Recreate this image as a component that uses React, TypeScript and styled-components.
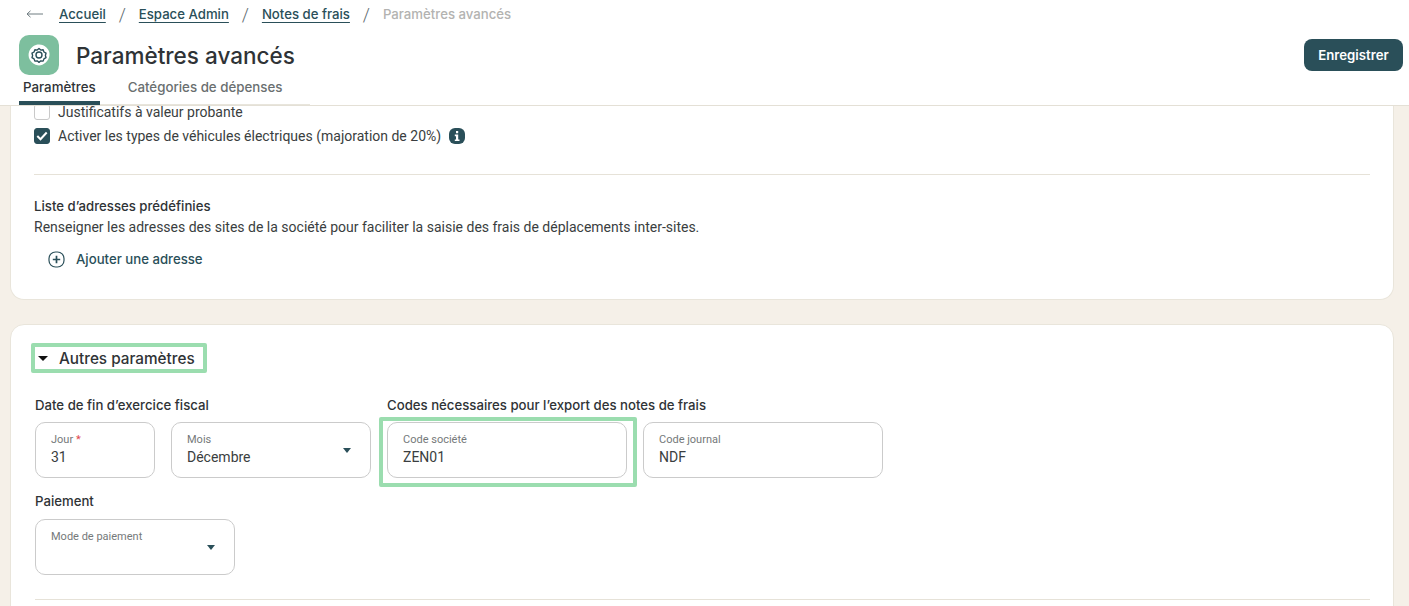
import React, { FunctionComponent } from "react";
import styled, { createGlobalStyle } from "styled-components";

const TEAL = "#2a4f59";
const HEADING_FONT = '"Inter", "Noto Sans", sans-serif';
const BODY_FONT = 'Roboto, "Liberation Sans", sans-serif';

const GlobalStyle = createGlobalStyle`
  html, body {
    margin: 0;
    height: 100%;
    overflow: hidden;
    background: #f5f0e8;
    font-family: ${BODY_FONT};
    color: #33383a;
  }
  * { box-sizing: border-box; }
`;

const Page = styled.div`
  height: 606px;
  display: flex;
  flex-direction: column;
  overflow: hidden;
`;

const Header = styled.header`
  height: 106px;
  flex: none;
  background: #fff;
  border-bottom: 1px solid #e4e0d6;
`;

const Breadcrumb = styled.nav`
  height: 28px;
  display: flex;
  align-items: center;
  padding-left: 26px;
  font-family: ${HEADING_FONT};
  font-size: 13.2px;
  font-weight: 500;
`;

const Crumb = styled.a`
  color: ${TEAL};
  text-decoration: underline;
  text-underline-offset: 3px;
`;

const CurrentCrumb = styled.span`
  color: #b3b3b1;
`;

const Slash = styled.span`
  width: 33px;
  text-align: center;
  color: #5c6a6e;
  font-family: ${BODY_FONT};
  font-weight: 300;
  font-size: 18px;
`;

const TitleRow = styled.div`
  height: 40px;
  margin-top: 7px;
  display: flex;
  align-items: center;
  padding: 0 6px 0 19px;
`;

const IconTile = styled.div`
  width: 40px;
  height: 40px;
  border-radius: 10px;
  background: #7dbf9e;
  display: flex;
  align-items: center;
  justify-content: center;
`;

const Title = styled.h1`
  margin: 0 0 0 17px;
  flex: 1;
  font-family: ${HEADING_FONT};
  font-size: 22.5px;
  font-weight: 500;
  color: #2f3336;
`;

const SaveButton = styled.button`
  width: 99px;
  height: 32px;
  border: 0;
  border-radius: 8px;
  background: ${TEAL};
  color: #fff;
  font-family: ${HEADING_FONT};
  font-size: 13.2px;
  font-weight: 600;
`;

const Tabs = styled.div`
  width: 291px;
  height: 25px;
  margin: 5px 0 0 19px;
  display: flex;
  border-bottom: 1px solid #e8e5dc;
`;

const Tab = styled.div<{ $active?: boolean }>`
  height: 25px;
  flex: none;
  padding: 0 4px;
  margin-right: ${({ $active }) => ($active ? "24px" : "0")};
  border-bottom: ${({ $active }) => ($active ? `4px solid ${TEAL}` : "0")};
  border-radius: 3px 3px 0 0;
  font-family: ${HEADING_FONT};
  font-size: 13.3px;
  line-height: 15px;
  font-weight: 500;
  color: ${({ $active }) => ($active ? "#2f3336" : "#6a6f70")};
  white-space: nowrap;
`;

const Scroller = styled.main`
  flex: 1;
  overflow: hidden;
  padding: 0 15px 0 10px;
  display: flex;
  flex-direction: column;
  gap: 24px;
`;

const ClippedCard = styled.section`
  flex: none;
  margin-top: -6px;
  background: #fff;
  border: 1px solid #e9e5db;
  border-top: 0;
  border-radius: 0 0 14px 14px;
  padding: 0 23px;
`;

const Card = styled.section`
  flex: none;
  background: #fff;
  border: 1px solid #e9e5db;
  border-radius: 14px;
  padding: 22px 23px 0 24px;
`;

const CheckRow = styled.label`
  display: flex;
  align-items: center;
  height: 24px;
  font-size: 14px;
  color: #3a3e40;
`;

const CheckBox = styled.span<{ $checked?: boolean }>`
  width: 16px;
  height: 16px;
  margin-right: 8px;
  border-radius: 3px;
  border: 1px solid ${({ $checked }) => ($checked ? TEAL : "#c9c9c9")};
  background: ${({ $checked }) => ($checked ? TEAL : "#fff")};
  display: flex;
  align-items: center;
  justify-content: center;
`;

const InfoBadge = styled.span`
  width: 16px;
  height: 16px;
  margin-left: 8px;
  border-radius: 6px;
  background: ${TEAL};
  display: flex;
  align-items: center;
  justify-content: center;
`;

const Divider = styled.hr<{ $top: number }>`
  margin: ${({ $top }) => $top}px 0 0;
  border: 0;
  border-top: 1px solid #e6e2d8;
`;

const FieldHeading = styled.h3<{ $top?: number }>`
  margin: ${({ $top }) => $top || 0}px 0 0;
  font-family: ${HEADING_FONT};
  font-size: 13.2px;
  line-height: 18px;
  font-weight: 540;
  color: #2f3336;
`;

const Paragraph = styled.p`
  margin: 3px 0 0;
  font-size: 14px;
  line-height: 18px;
  color: #3a3e40;
`;

const AddButton = styled.div`
  margin: 13px 0 30px 14px;
  display: flex;
  align-items: center;
  gap: 11px;
  height: 20px;
  font-family: ${HEADING_FONT};
  font-size: 13.2px;
  font-weight: 540;
  color: ${TEAL};
`;

const SectionToggle = styled.div`
  position: relative;
  display: flex;
  align-items: center;
  gap: 11px;
  width: fit-content;
  height: 22px;
  padding-left: 3px;
  font-family: ${HEADING_FONT};
  font-size: 15.3px;
  font-weight: 540;
  color: #2f3336;
`;

const Highlight = styled.span<{ $inset: string }>`
  position: absolute;
  inset: ${({ $inset }) => $inset};
  border: 4px solid #9bddaf;
  border-radius: 2px;
  pointer-events: none;
`;

const FieldsRow = styled.div`
  margin-top: 27px;
  display: flex;
  gap: 16px;
`;

const FieldGroup = styled.div<{ $gap?: number }>`
  display: flex;
  flex-direction: column;
  gap: ${({ $gap }) => $gap || 8}px;
`;

const FieldLine = styled.div`
  display: flex;
  gap: 16px;
`;

const Field = styled.div<{ $width: number }>`
  position: relative;
  width: ${({ $width }) => $width}px;
  height: 56px;
  padding: 10px 16px 0 15px;
  border: 1px solid #cbcbcb;
  border-radius: 10px;
`;

const FieldLabel = styled.div`
  font-size: 11px;
  line-height: 14px;
  color: #75797a;
`;

const Required = styled.span`
  color: #e0484d;
`;

const FieldValue = styled.div`
  margin-top: 1px;
  font-size: 14px;
  line-height: 18px;
  color: #3a3e40;
`;

const Caret = styled.span`
  position: absolute;
  right: 19px;
  top: 25px;
  width: 0;
  height: 0;
  border-left: 4.5px solid transparent;
  border-right: 4.5px solid transparent;
  border-top: 5px solid ${TEAL};
`;

const ToggleCaret = styled(Caret)`
  position: static;
  border-left-width: 5px;
  border-right-width: 5px;
  border-top-color: #111;
`;

const PaymentGroup = styled(FieldGroup)`
  margin-top: 14px;
`;

const CardEnd = styled.div`
  height: 40px;
`;

const SelectField: FunctionComponent<{
  label: string;
  value?: string;
  width: number;
}> = ({ label, value, width }) => (
  <Field $width={width}>
    <FieldLabel>{label}</FieldLabel>
    <FieldValue>{value}</FieldValue>
    <Caret />
  </Field>
);

const GearIcon = () => (
  <svg width="26" height="26" viewBox="0 0 26 26">
    <path
      d="M13 2.500c3.200 0 5.400 1 7.400 3 2.300 2.300 3.400 4.600 3.100 7.600-.3 3-1.600 5.700-4 7.600-2.200 1.800-5 3-7.800 2.600-2.900-.4-5.400-1.900-7-4.200C3 16.800 2.200 14 2.700 11.200 3.200 8.500 4.800 6 7.200 4.300 8.900 3.100 10.900 2.500 13 2.500z"
      fill="#fff"
    />
    <path
      d="M13 5.800l2 1.700 2.600-.3.900 2.500 2.300 1.300-.7 2.500.7 2.500-2.300 1.300-.9 2.500-2.600-.3-2 1.700-2-1.700-2.600.3-.9-2.500-2.300-1.300.7-2.500-.7-2.500 2.300-1.300.9-2.500 2.600.3z"
      transform="translate(1.300 1.300) scale(0.9)"
      fill="none"
      stroke={TEAL}
      strokeWidth="1.500"
      strokeLinejoin="round"
    />
    <circle cx="13" cy="13" r="3" fill="none" stroke={TEAL} strokeWidth="1.400" />
  </svg>
);

const BackArrow = () => (
  <svg width="17" height="8" viewBox="0 0 17 8" style={{ marginRight: 16 }}>
    <path d="M17 4H1M4.500.8 1 4l3.500 3.200" fill="none" stroke="#6f7c80" strokeWidth="1" />
  </svg>
);

const App: FunctionComponent = () => (
  <Page>
    <GlobalStyle />
    <Header>
      <Breadcrumb>
        <BackArrow />
        <Crumb>Accueil</Crumb>
        <Slash>/</Slash>
        <Crumb>Espace Admin</Crumb>
        <Slash>/</Slash>
        <Crumb>Notes de frais</Crumb>
        <Slash>/</Slash>
        <CurrentCrumb>Paramètres avancés</CurrentCrumb>
      </Breadcrumb>
      <TitleRow>
        <IconTile>
          <GearIcon />
        </IconTile>
        <Title>Paramètres avancés</Title>
        <SaveButton>Enregistrer</SaveButton>
      </TitleRow>
      <Tabs>
        <Tab $active>Paramètres</Tab>
        <Tab>Catégories de dépenses</Tab>
      </Tabs>
    </Header>
    <Scroller>
      <ClippedCard>
        <CheckRow>
          <CheckBox />
          Justificatifs à valeur probante
        </CheckRow>
        <CheckRow>
          <CheckBox $checked>
            <svg width="12" height="10" viewBox="0 0 12 10">
              <path d="M1.300 5l3.200 3.200 6.200-6.700" fill="none" stroke="#fff" strokeWidth="2" />
            </svg>
          </CheckBox>
          Activer les types de véhicules électriques (majoration de 20%)
          <InfoBadge>
            <svg width="6" height="10" viewBox="0 0 6 10">
              <path d="M2 0h2.200v2.200H2zM.8 3.600h3.400v4.800H5.500V10H.8V8.400H2V5.200H.8z" fill="#fff" />
            </svg>
          </InfoBadge>
        </CheckRow>
        <Divider $top={26} />
        <FieldHeading $top={22}>Liste d’adresses prédéfinies</FieldHeading>
        <Paragraph>
          Renseigner les adresses des sites de la société pour faciliter la saisie des frais de
          déplacements inter-sites.
        </Paragraph>
        <AddButton>
          <svg width="17" height="17" viewBox="0 0 17 17">
            <rect x="1" y="1" width="15" height="15" rx="6.500" fill="none" stroke={TEAL} strokeWidth="1.200" />
            <path d="M8.500 4.800v7.400M4.800 8.500h7.400" stroke={TEAL} strokeWidth="1.700" />
          </svg>
          Ajouter une adresse
        </AddButton>
      </ClippedCard>
      <Card>
        <SectionToggle>
          <Highlight $inset="-4px -12px -4px -4px" />
          <ToggleCaret />
          Autres paramètres
        </SectionToggle>
        <FieldsRow>
          <FieldGroup>
            <FieldHeading>Date de fin d’exercice fiscal</FieldHeading>
            <FieldLine>
              <Field $width={120}>
                <FieldLabel>
                  Jour <Required>*</Required>
                </FieldLabel>
                <FieldValue>31</FieldValue>
              </Field>
              <SelectField label="Mois" value="Décembre" width={200} />
            </FieldLine>
          </FieldGroup>
          <FieldGroup>
            <FieldHeading>Codes nécessaires pour l’export des notes de frais</FieldHeading>
            <FieldLine>
              <Field $width={240}>
                <Highlight $inset="-6px -11px -10px -9px" />
                <FieldLabel>Code société</FieldLabel>
                <FieldValue>ZEN01</FieldValue>
              </Field>
              <Field $width={240}>
                <FieldLabel>Code journal</FieldLabel>
                <FieldValue>NDF</FieldValue>
              </Field>
            </FieldLine>
          </FieldGroup>
        </FieldsRow>
        <PaymentGroup $gap={9}>
          <FieldHeading>Paiement</FieldHeading>
          <SelectField label="Mode de paiement" width={200} />
        </PaymentGroup>
        <Divider $top={24} />
        <CardEnd />
      </Card>
    </Scroller>
  </Page>
);

export default App;
